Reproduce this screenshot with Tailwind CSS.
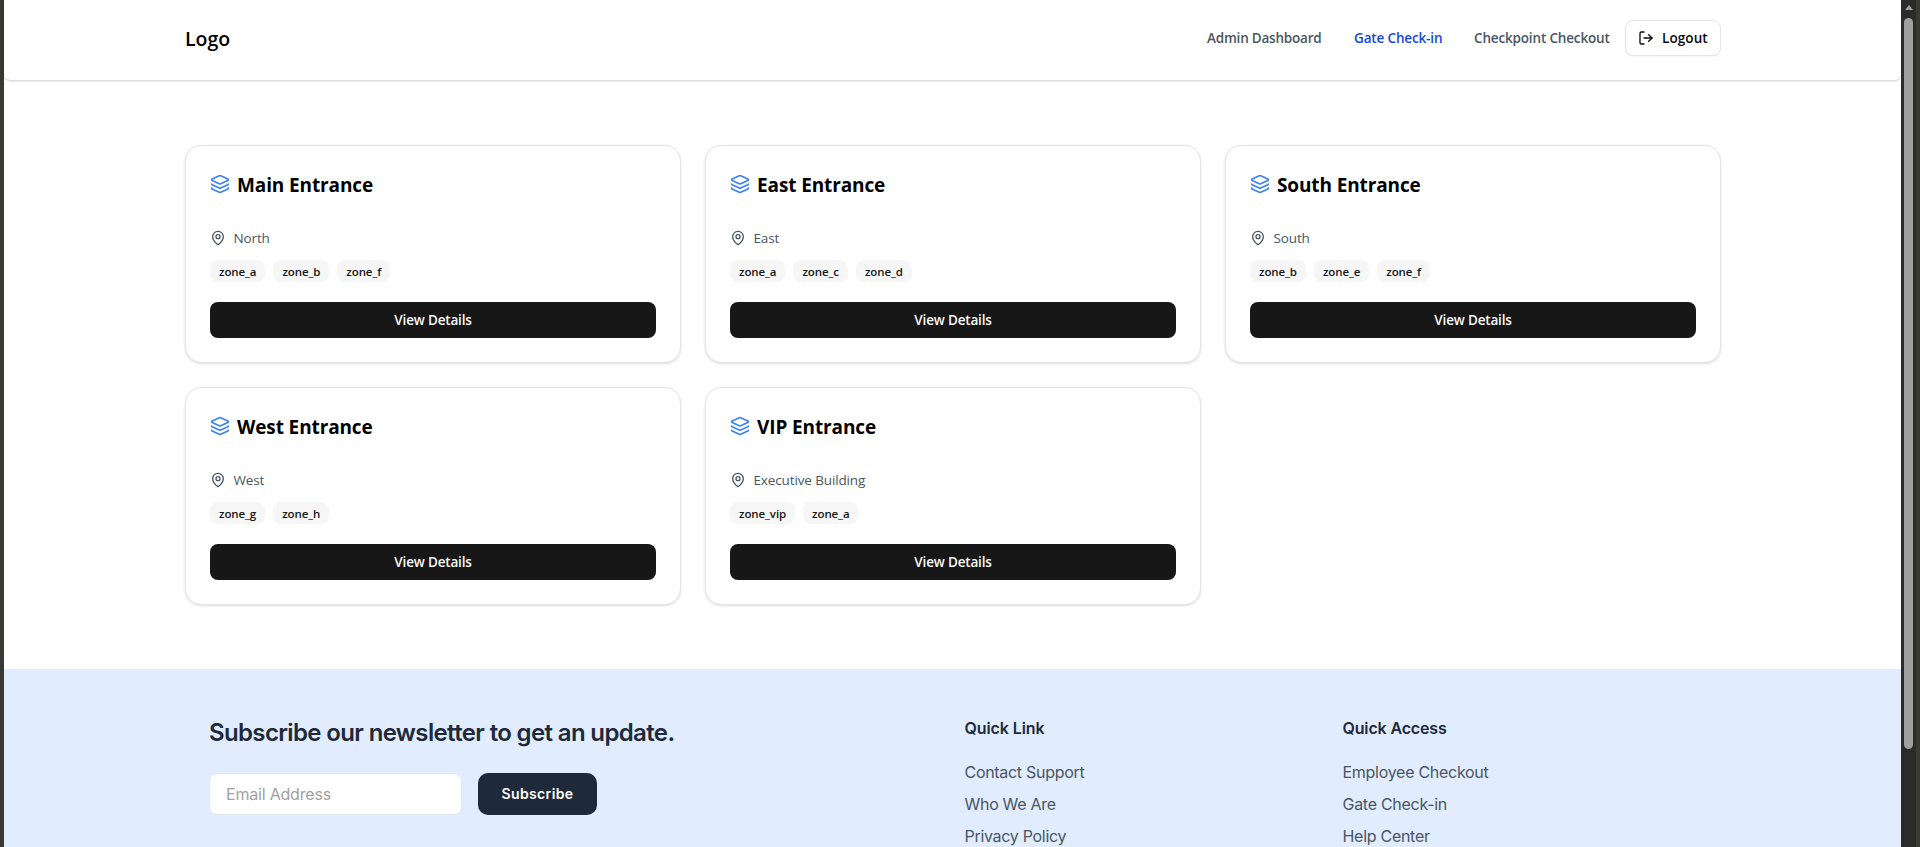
<!DOCTYPE html>
<html lang="en">
<head>
<meta charset="utf-8">
<title>Gates</title>
<script src="https://cdn.jsdelivr.net/npm/@tailwindcss/browser@4"></script>
</head>
<body class="flex h-[847px] overflow-hidden bg-[#3b3936] font-['Open_Sans',sans-serif] text-neutral-950">
<svg class="hidden">
  <symbol id="layers" viewBox="0 0 24 24" fill="none" stroke="currentColor" stroke-width="2" stroke-linecap="round" stroke-linejoin="round"><path d="M12.83 2.18a2 2 0 0 0-1.66 0L2.6 6.08a1 1 0 0 0 0 1.83l8.58 3.91a2 2 0 0 0 1.66 0l8.58-3.9a1 1 0 0 0 0-1.83Z"/><path d="M2 12a1 1 0 0 0 .58.91l8.6 3.91a2 2 0 0 0 1.65 0l8.58-3.9A1 1 0 0 0 22 12"/><path d="M2 17a1 1 0 0 0 .58.91l8.6 3.91a2 2 0 0 0 1.65 0l8.58-3.9A1 1 0 0 0 22 17"/></symbol>
  <symbol id="pin" viewBox="0 0 24 24" fill="none" stroke="currentColor" stroke-width="2" stroke-linecap="round" stroke-linejoin="round"><path d="M20 10c0 4.993-5.539 10.193-7.399 11.799a1 1 0 0 1-1.202 0C9.539 20.193 4 14.993 4 10a8 8 0 0 1 16 0"/><circle cx="12" cy="10" r="3"/></symbol>
</svg>
<div class="ml-1 flex w-[1897px] shrink-0 flex-col bg-white">
  <header class="h-20 shrink-0 rounded-b-md bg-white shadow-[0_1px_3px_0_rgb(0_0_0/0.16),0_1px_2px_-1px_rgb(0_0_0/0.16)]">
    <div class="ml-[181px] flex h-full w-[1536px] items-start justify-between">
      <div class="pt-6 text-[19.5px] leading-[30px] font-semibold text-black">Logo</div>
      <nav class="flex items-center pt-5 text-[13.5px] font-semibold whitespace-nowrap text-gray-600">
        <a class="w-[147px] tracking-[-0.21px]">Admin Dashboard</a>
        <a class="w-[120px] tracking-[-0.15px] text-blue-700">Gate Check-in</a>
        <a class="w-[151px] tracking-[-0.16px]">Checkpoint Checkout</a>
        <button class="flex h-9 w-24 items-center rounded-lg border border-neutral-200 bg-white pl-3 tracking-[0.1px] text-neutral-950 shadow-xs">
          <svg class="mr-2 size-4" viewBox="0 0 24 24" fill="none" stroke="currentColor" stroke-width="2" stroke-linecap="round" stroke-linejoin="round"><path d="m16 17 5-5-5-5"/><path d="M21 12H9"/><path d="M9 21H5a2 2 0 0 1-2-2V5a2 2 0 0 1 2-2h4"/></svg>Logout
        </button>
      </nav>
    </div>
  </header>
  <main class="h-[589px] shrink-0 pt-[65px]">
    <div id="gates" class="ml-[181px] grid w-[1536px] grid-cols-3 gap-6"></div>
  </main>
  <footer class="h-[178px] shrink-0 overflow-hidden bg-[#e1edff] font-['Inter',sans-serif] text-gray-800">
    <div class="ml-[205px] flex pt-[47px]">
      <div class="w-[755.5px] pt-px">
        <h2 class="text-2xl leading-8 font-semibold tracking-[-0.64px]">Subscribe our newsletter to get an update.</h2>
        <div class="mt-6 flex items-center gap-4">
          <input class="h-[42px] w-[253px] rounded-lg border border-[#e3e8f0] bg-white px-4 text-base tracking-[-0.2px] placeholder:text-[#a1a1a1]" placeholder="Email Address">
          <button class="h-[42px] w-[119px] rounded-[10px] bg-gray-800 text-sm font-semibold tracking-[0.35px] text-white">Subscribe</button>
        </div>
      </div>
      <div class="w-[378px]">
        <h3 class="leading-6 font-semibold tracking-[-0.1px]">Quick Link</h3>
        <ul class="mt-5 flex flex-col gap-2 leading-6 tracking-[-0.3px] text-gray-600"><li>Contact Support</li><li>Who We Are</li><li>Privacy Policy</li></ul>
      </div>
      <div>
        <h3 class="leading-6 font-semibold tracking-[-0.15px]">Quick Access</h3>
        <ul class="mt-5 flex flex-col gap-2 leading-6 tracking-[-0.28px] text-gray-600"><li>Employee Checkout</li><li>Gate Check-in</li><li>Help Center</li></ul>
      </div>
    </div>
  </footer>
</div>
<div class="flex w-[15px] shrink-0 flex-col items-center bg-[#2b2b2b] pt-[5px]">
  <svg class="h-[5px] w-2" viewBox="0 0 8 5"><path d="M4 0 8 5H0Z" fill="#9f9f9f"/></svg>
  <div class="mt-2 h-[731px] w-[9px] rounded-full bg-[#9f9f9f]"></div>
</div>
<script>
const gates = [
  ['Main Entrance', 'North', ['zone_a', 'zone_b', 'zone_f']],
  ['East Entrance', 'East', ['zone_a', 'zone_c', 'zone_d']],
  ['South Entrance', 'South', ['zone_b', 'zone_e', 'zone_f']],
  ['West Entrance', 'West', ['zone_g', 'zone_h']],
  ['VIP Entrance', 'Executive Building', ['zone_vip', 'zone_a']],
];
document.getElementById('gates').innerHTML = gates.map(([name, place, zones]) => `
  <section class="h-[218px] rounded-2xl border border-neutral-200 bg-white p-6 shadow-sm">
    <h2 class="flex h-7 items-center gap-[7px] text-[19px] leading-7 font-bold tracking-[-0.12px] whitespace-nowrap text-black"><svg class="size-5 text-[#3b82f6]"><use href="#layers"/></svg><span class="pt-0.5">${name}</span></h2>
    <div class="mt-[30px] flex h-5 items-center gap-[7.5px] text-[13.5px] tracking-[-0.13px] text-gray-600"><svg class="size-4"><use href="#pin"/></svg>${place}</div>
    <div class="mt-3 flex gap-2">${zones.map(z => `<span class="flex h-[22px] items-center rounded-lg bg-[#f6f6f6] px-[9px] pt-0.5 text-[11.5px] font-semibold tracking-[-0.1px] text-neutral-900">${z}</span>`).join('')}</div>
    <button class="mt-5 flex h-9 w-full items-center justify-center rounded-lg bg-neutral-900 text-[13.5px] font-semibold tracking-[-0.17px] text-neutral-50">View Details</button>
  </section>`).join('');
</script>
</body>
</html>
